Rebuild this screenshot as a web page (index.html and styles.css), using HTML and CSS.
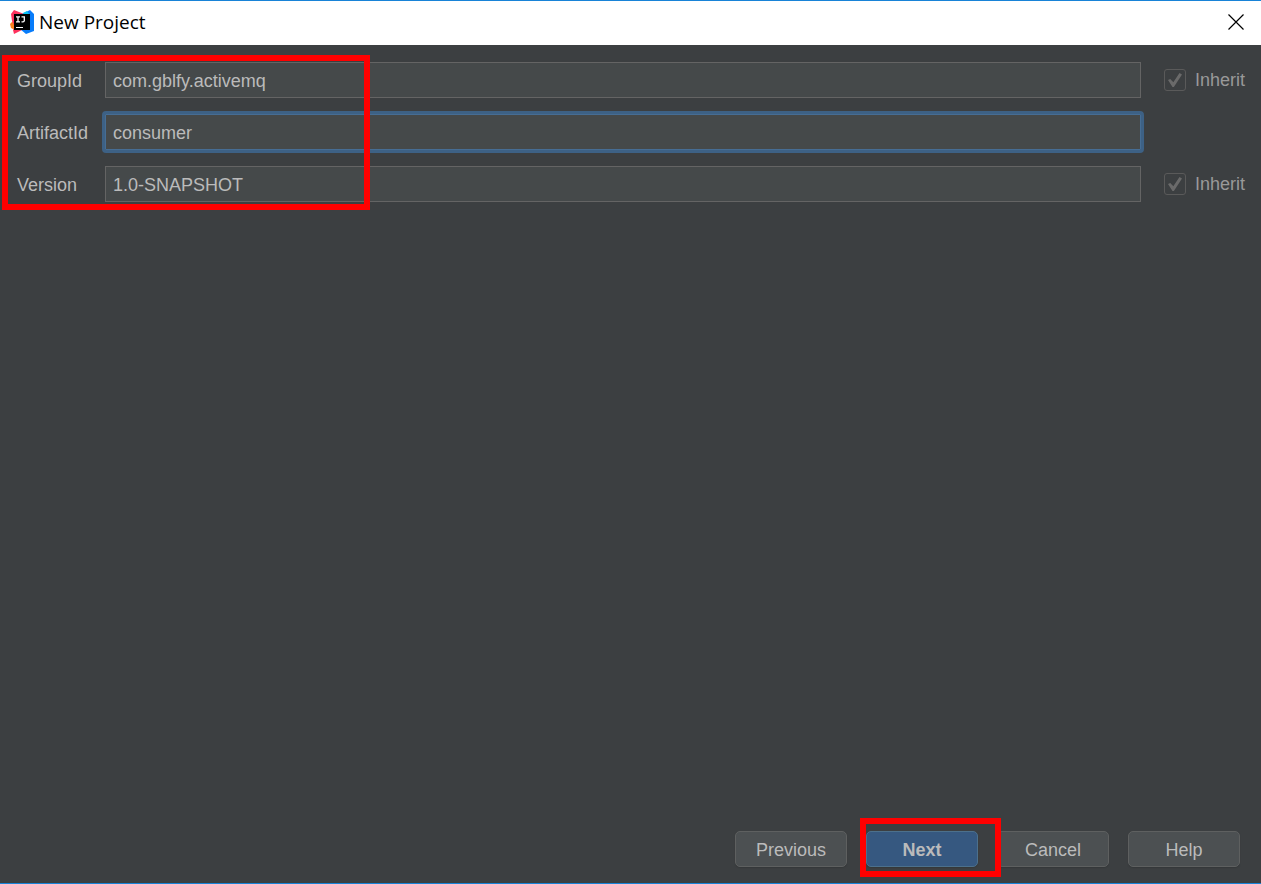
FILE: index.html
```html
<!DOCTYPE html>
<html lang="en">
<head>
    <meta charset="UTF-8" />
    <title>New Project</title>
    <link rel="stylesheet" href="styles.css">
</head>
<body>
<header class="titlebar">
    <svg class="logo" viewBox="0 0 24 24" aria-hidden="true">
        <path fill="#fc801d" d="M0 14 3 11 10 18 7 21 1 18z" />
        <path fill="#fe315d" d="M1 4 4 0 14 4 12 20 4 24 3 20 5 17 2 11z" />
        <path fill="#087cfa" d="M12 4 20 0 24 4 24 21 16 24 10 19z" />
        <path fill="#07c3f2" d="M13 3 17 1 20 5 17 8z" />
        <path fill="#000" d="M4 4H20V20H4z" />
        <path fill="none" stroke="#fff" stroke-width="1.3" d="M6 6.8H10M8 6.6V12M6 11.8H10M11.5 6.8H15M14.3 6.6V10.8Q14.2 11.8 13 11.8H11.5" />
        <path fill="#fff" d="M6 17H13V18H6z" />
    </svg>
    <h1>New Project</h1>
    <button class="close" type="button" aria-label="Close">
        <svg viewBox="0 0 16 16" aria-hidden="true"><path d="M.5.5 15.5 15.5M15.5.5.5 15.5" /></svg>
    </button>
</header>

<form class="content">
    <div class="fields">
        <div class="row">
            <label for="groupId">GroupId</label>
            <input type="text" id="groupId" value="com.gblfy.activemq" />
            <label class="inherit"><input type="checkbox" checked disabled /> Inherit</label>
        </div>
        <div class="row">
            <label for="artifactId">ArtifactId</label>
            <input type="text" id="artifactId" class="focused" value="consumer" />
        </div>
        <div class="row">
            <label for="version">Version</label>
            <input type="text" id="version" value="1.0-SNAPSHOT" />
            <label class="inherit"><input type="checkbox" checked disabled /> Inherit</label>
        </div>
        <div class="mark mark-fields"></div>
    </div>

    <div class="buttons">
        <button type="button">Previous</button>
        <div class="next">
            <button type="button" class="primary">Next</button>
            <div class="mark mark-next"></div>
        </div>
        <button type="button">Cancel</button>
        <button type="button">Help</button>
    </div>
</form>
</body>
</html>
```

FILE: styles.css
```css
:root {
    --bg: #3c3f41;
    --field: #45494a;
    --line: #646464;
    --text: #bbbbbb;
    --accent: #1883d7;
}

* {
    box-sizing: border-box;
}

body {
    margin: 0;
    min-height: 100vh;
    display: flex;
    flex-direction: column;
    background-color: var(--bg);
    border-top: 1px solid var(--accent);
    border-bottom: 1px solid var(--accent);
    color: var(--text);
    font-family: "Liberation Sans", Arial, sans-serif;
    font-size: 18px;
}

.titlebar {
    display: flex;
    align-items: center;
    height: 44px;
    padding: 0 17px 2px 10px;
    background-color: white;
    color: black;
}

.logo {
    width: 24px;
    height: 24px;
    margin-right: 5px;
}

h1 {
    flex: 1;
    margin: 0;
    font-family: "Open Sans", "Noto Sans", sans-serif;
    font-size: 19px;
    font-weight: normal;
}

.close {
    display: flex;
    padding: 0;
    background: none;
    border: none;
}

.close svg {
    width: 16px;
    height: 16px;
    fill: none;
    stroke: black;
    stroke-width: 1.2;
}

.content {
    flex: 1;
    display: flex;
    flex-direction: column;
    justify-content: space-between;
}

.fields {
    position: relative;
    display: flex;
    flex-direction: column;
    gap: 16px;
    padding: 17px 16px 0 17px;
}

.row {
    display: grid;
    grid-template-columns: 88px 1fr 104px;
    align-items: center;
}

.row label {
    padding-top: 2px;
}

input[type="text"] {
    width: 100%;
    height: 36px;
    padding: 3px 7px 0;
    background-color: var(--field);
    border: 1px solid var(--line);
    outline: none;
    color: var(--text);
    font: inherit;
}

input[type="text"].focused {
    border-color: #466d94;
    box-shadow: 0 0 0 2px #3d6185;
    outline: 3px solid #3d6185;
    border-radius: 1px;
}

.row .inherit {
    display: flex;
    align-items: center;
    gap: 9px;
    padding: 0 0 0 23px;
    color: #999999;
    line-height: 36px;
}

input[type="checkbox"] {
    appearance: none;
    flex: none;
    width: 22px;
    height: 22px;
    margin: 0;
    border: 1px solid #5a5a5a;
    border-radius: 3px;
    display: grid;
    place-items: center;
}

input[type="checkbox"]:checked::before {
    content: "";
    width: 14px;
    height: 14px;
    background-color: #6a6a6a;
    clip-path: polygon(0 50%, 16% 42%, 38% 66%, 82% 0, 100% 10%, 42% 100%, 32% 100%);
}

.buttons {
    display: flex;
    justify-content: flex-end;
    gap: 19px;
    padding: 0 21px 16px;
}

.buttons button {
    display: block;
    width: 112px;
    height: 36px;
    padding: 3px 0 0;
    background-color: #4c5052;
    border: 1px solid #5e6060;
    border-radius: 5px;
    box-shadow: 0 1px 1px #35383a;
    color: var(--text);
    font: inherit;
}

.buttons .primary {
    background-color: #365880;
    border-color: #4c708c;
    font-weight: bold;
}

.next {
    position: relative;
}

/* red highlight frames */
.mark {
    position: absolute;
    border: 6px solid red;
    pointer-events: none;
}

.mark-fields {
    top: 10px;
    bottom: -8px;
    left: 2px;
    width: 368px;
}

.mark-next {
    top: -13px;
    right: -23px;
    bottom: -10px;
    left: -6px;
}
```
